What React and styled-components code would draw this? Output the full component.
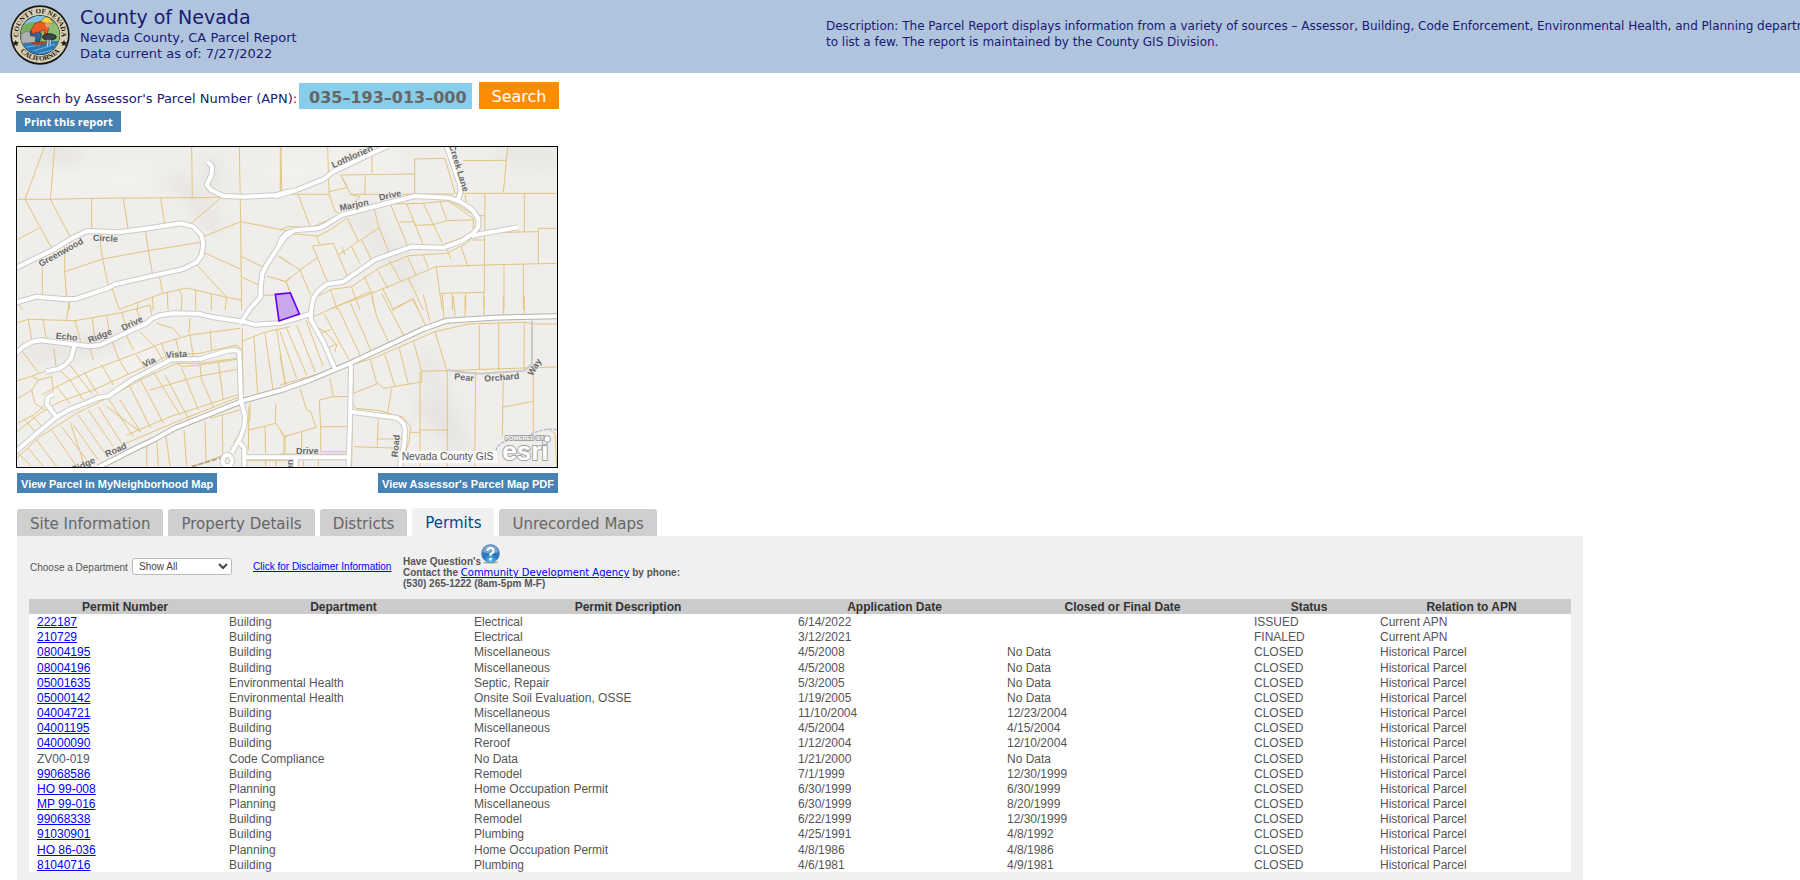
import React from "react";
import styled, { createGlobalStyle } from "styled-components";

const verdana = `"DejaVu Sans", sans-serif`;
const arial = `"Liberation Sans", sans-serif`;

const GlobalStyle = createGlobalStyle`
  * { box-sizing: border-box; }
  body { margin: 0; background: #fff; font-family: ${arial}; color: #555; }
  a { color: #0000ff; text-decoration: underline; }
`;

const Header = styled.header`
  display: flex;
  min-height: 73px;
  overflow: hidden;
  background: #b0c4de;
  color: #191970;
  font-family: ${verdana};
`;
const SealBox = styled.div`
  flex: none;
  padding: 5px 10px 8px 10px;
  svg { display: block; }
`;
const Titles = styled.div`
  flex: none;
  width: 746px;
  padding-top: 4px;
`;
const Title = styled.h1`
  margin: 0;
  font-size: 19px;
  line-height: 26px;
  font-weight: 400;
`;
const Line = styled.div`
  font-size: ${(p) => (p.$small ? 12 : 13)}px;
  line-height: 16px;
  white-space: nowrap;
`;
const Description = styled.div`
  flex: none;
  padding-top: 18px;
`;

const Top = styled.section`
  padding: 9px 16px 0;
  color: #191970;
  font-family: ${verdana};
`;
const SearchForm = styled.form`
  display: flex;
  align-items: flex-end;
`;
const SearchLabel = styled.label`
  font-size: 13px;
  line-height: 20px;
  width: 283px;
  white-space: nowrap;
`;
const ApnInput = styled.input`
  width: 173px;
  height: 26px;
  margin-right: 7px;
  padding: 2px 0 0 10px;
  border: 0;
  background: #87ceeb;
  color: #666;
  font: 700 16px ${verdana};
`;
const SearchButton = styled.button`
  width: 80px;
  height: 27px;
  padding: 2px 0 0;
  border: 0;
  background: #ff8c00;
  color: #fff;
  font: 400 16px ${verdana};
`;
const BlueButton = styled.button`
  height: 20px;
  padding: 1px 4px 0;
  border: 0;
  background: #4682b4;
  color: #fff;
  font: 700 11px ${arial};
  white-space: nowrap;
`;
const PrintButton = styled(BlueButton)`
  height: 21px;
  padding: 0 8px;
  font-family: "Open Sans", sans-serif;
`;
const PrintRow = styled.div`
  display: flex;
  padding-top: 2px;
`;
const MapColumn = styled.div`
  width: 542px;
  padding-top: 14px;
`;
const MapFrame = styled.div`
  border: 1px solid #000;
  svg { display: block; width: 100%; height: auto; }
`;
const MapButtons = styled.div`
  display: flex;
  justify-content: space-between;
  padding: 5px 0 0 1px;
`;

const Main = styled.main`
  width: 87%;
  margin: 15px 0 0 17px;
`;
const Tabs = styled.div`
  display: flex;
  align-items: flex-end;
  gap: 5px;
`;
const Tab = styled.button`
  height: ${(p) => (p.$active ? 28 : 27)}px;
  padding: 2px 13px 0;
  border: 0;
  border-radius: 3px 3px 0 0;
  background: ${(p) => (p.$active ? "#f0f0f0" : "#cfcfcf")};
  color: ${(p) => (p.$active ? "#004b87" : "#666")};
  font: 400 15px ${verdana};
  white-space: nowrap;
`;
const Panel = styled.section`
  padding: 8px 12px 10px;
  background: #f0f0f0;
`;
const Tools = styled.div`
  display: flex;
  height: 55px;
  padding-left: 1px;
  font-size: 10px;
`;
const DeptLabel = styled.label`
  width: 102px;
  padding-top: 17px;
  line-height: 14px;
`;
const DeptSelect = styled.select`
  width: 100px;
  height: 17px;
  margin: 14px 21px 0 0;
  padding: 0 2px;
  border: 1px solid #bbb;
  border-radius: 3px;
  background: #fff;
  color: #444;
  font: 400 10px ${arial};
`;
const Disclaimer = styled.a`
  width: 150px;
  padding-top: 16px;
  line-height: 14px;
  white-space: nowrap;
`;
const Contact = styled.div`
  font-weight: 700;
  line-height: 11px;
  color: #555;
  white-space: nowrap;
  a { font-family: ${verdana}; font-weight: 400; }
`;
const Question = styled.div`
  display: flex;
  align-items: flex-end;
  height: 23px;
  svg { margin-bottom: 3px; }
`;

const PermitTable = styled.table`
  width: 100%;
  height: 273px;
  border-collapse: collapse;
  table-layout: fixed;
  background: #fff;
  font-size: 12px;
  line-height: 13px;
`;
const Th = styled.th`
  height: 15px;
  padding: 1px 0 0;
  background: #cbcbcb;
  color: #333;
  text-align: center;
`;
const Td = styled.td`
  padding: 2px 8px 0;
  white-space: nowrap;
`;

const columns = [
  ["Permit Number", 192],
  ["Department", 245],
  ["Permit Description", 324],
  ["Application Date", 209],
  ["Closed or Final Date", 247],
  ["Status", 126],
  ["Relation to APN", 199],
];

const H = "Historical Parcel";
const permits = [
  ["222187", "Building", "Electrical", "6/14/2022", "", "ISSUED", "Current APN"],
  ["210729", "Building", "Electrical", "3/12/2021", "", "FINALED", "Current APN"],
  ["08004195", "Building", "Miscellaneous", "4/5/2008", "No Data", "CLOSED", H],
  ["08004196", "Building", "Miscellaneous", "4/5/2008", "No Data", "CLOSED", H],
  ["05001635", "Environmental Health", "Septic, Repair", "5/3/2005", "No Data", "CLOSED", H],
  ["05000142", "Environmental Health", "Onsite Soil Evaluation, OSSE", "1/19/2005", "No Data", "CLOSED", H],
  ["04004721", "Building", "Miscellaneous", "11/10/2004", "12/23/2004", "CLOSED", H],
  ["04001195", "Building", "Miscellaneous", "4/5/2004", "4/15/2004", "CLOSED", H],
  ["04000090", "Building", "Reroof", "1/12/2004", "12/10/2004", "CLOSED", H],
  ["ZV00-019", "Code Compliance", "No Data", "1/21/2000", "No Data", "CLOSED", H],
  ["99068586", "Building", "Remodel", "7/1/1999", "12/30/1999", "CLOSED", H],
  ["HO 99-008", "Planning", "Home Occupation Permit", "6/30/1999", "6/30/1999", "CLOSED", H],
  ["MP 99-016", "Planning", "Miscellaneous", "6/30/1999", "8/20/1999", "CLOSED", H],
  ["99068338", "Building", "Remodel", "6/22/1999", "12/30/1999", "CLOSED", H],
  ["91030901", "Building", "Plumbing", "4/25/1991", "4/8/1992", "CLOSED", H],
  ["HO 86-036", "Planning", "Home Occupation Permit", "4/8/1986", "4/8/1986", "CLOSED", H],
  ["81040716", "Building", "Plumbing", "4/6/1981", "4/9/1981", "CLOSED", H],
];

function Seal() {
  return (
    <svg width="60" height="60" viewBox="0 0 180 180" role="img" aria-label="County of Nevada seal">
      <defs>
        <clipPath id="sealInner"><circle cx="90" cy="90" r="58" /></clipPath>
        <path id="arcTop" d="M25 90A65 65 0 0 1 155 90" />
        <path id="arcBottom" d="M13 90A77 77 0 0 0 167 90" />
      </defs>
      <circle cx="90" cy="90" r="89" fill="#151515" />
      <circle cx="90" cy="90" r="84" fill="#d9cfb2" />
      <circle cx="90" cy="90" r="60" fill="#222" />
      <g clipPath="url(#sealInner)">
        <rect x="30" y="30" width="120" height="120" fill="#7fc4e6" />
        <path d="M30 66Q60 44 92 56T150 58V120H30Z" fill="#79ac5c" />
        <path d="M96 64Q125 50 150 60V116H96Z" fill="#8fbf72" />
        <path d="M30 112L150 108V150H30Z" fill="#2c78b8" />
        <path d="M48 126L90 120M70 138L135 118M86 146L130 134" stroke="#6bb5e2" strokeWidth="3" />
        <path d="M32 115L34 88 46 80 62 78 78 88 84 112Z" fill="#b0b0b0" stroke="#777" strokeWidth="2" />
        <path d="M60 112L118 108 122 114 78 122Z" fill="#a34a28" />
        <path d="M60 80L86 78 94 88 88 110 76 110 78 94 62 92Z" fill="#2f66a6" stroke="#223" strokeWidth="2" />
        <path d="M64 74L76 54 94 48 108 56 116 70 112 86 104 88 102 74 90 80 66 86Z" fill="#ee5a24" stroke="#7c2d14" strokeWidth="2" />
        <path d="M94 46L106 36 120 38 126 48 132 54 112 55 96 52Z" fill="#f8d13c" stroke="#8e681d" strokeWidth="2" />
        <path d="M104 55L118 55 118 66 110 68Z" fill="#e6a276" />
        <ellipse cx="118" cy="96" rx="21" ry="10" fill="#39434a" stroke="#111" strokeWidth="2" />
        <path d="M114 104L112 126M121 104L120 120" stroke="#9fd5f0" strokeWidth="4" />
      </g>
      <g fill="#171717" fontFamily="Liberation Serif, serif" fontWeight="700" fontSize="21" textAnchor="middle">
        <text><textPath href="#arcTop" startOffset="50%">COUNTY OF NEVADA</textPath></text>
        <text><textPath href="#arcBottom" startOffset="50%">CALIFORNIA</textPath></text>
      </g>
      <path d="M17 105l3 6 7 1-5 4 1 7-6-3-6 3 1-7-5-4 7-1zM162 105l3 6 7 1-5 4 1 7-6-3-6 3 1-7-5-4 7-1z" fill="#222" />
    </svg>
  );
}

/* The map is drawn as four tiles, each with its own origin. */
const tiles = {
  nw: "translate(-21 -21)",
  ne: "translate(789 -21)",
  sw: "translate(-21 459)",
  se: "translate(789 459)",
};

const roads = [
  ["nw", "M15 385L128 330 185 295 232 273 325 277 400 267 515 250 550 260 575 287 580 312 575 345 560 367 520 387 430 407 315 433 295 444 200 476 170 478 80 470 15 488"],
  ["nw", "M592 64L606 79 605 103 590 135 603 150 640 168 700 170 795 166 840 153"],
  ["ne", "M-15 170L0 165 50 150 130 118 160 95 255 50 325 17"],
  ["ne", "M498 15L515 60 540 135 542 155 533 182"],
  ["sw", "M690 72L720 26 752 -10 752 -38 757 -80 770 -105 825 -190 850 -206"],
  ["ne", "M-3 315L5 295 20 280 45 271 115 265 135 256 185 225 405 168 505 173 540 185 575 207 595 235 595 260 580 280 545 303 490 323 395 320 285 359 190 425 140 433 113 455 100 475 93 515 92 530"],
  ["ne", "M575 289L605 281 715 262"],
  ["sw", "M15 162L40 140 65 126 90 121 240 139 270 135 330 107 410 70 425 56 450 46 490 40 565 41 610 52 700 65 735 74 810 69 902 42"],
  ["sw", "M193 138L183 175 165 195 145 207 108 214"],
  ["sw", "M15 457L75 405 140 350 180 328 235 306 260 295 295 288 370 237 430 206 485 178 570 177 650 153 675 150 688 157 693 300 705 350 703 380 690 415 665 458"],
  ["sw", "M130 282L113 293 110 312 140 352"],
  ["sw", "M690 428L703 445 703 510"],
  ["sw", "M705 472L1022 472"],
  ["se", "M93 42L93 60 130 125 165 207"],
  ["se", "M213 195L210 370 205 510"],
  ["se", "M213 335L350 353 370 370 375 390 373 430 358 510"],
  ["se", "M47 472L47 510"],
];
const highway = ["sw", "M265 502L385 441 430 420 495 384 610 338 700 302 815 270 900 240 1020 190 1240 87 1310 62 1450 53 1660 48"];

const parcels = [
  ["nw", "M103 21L45 178M134 21L121 178M15 178L121 178 245 175 545 173 635 172M545 21L547 173M688 21L692 245 695 510M811 21V155M45 178L125 325M121 178L182 293M245 175V272M340 175L354 267M452 175L464 252M635 172L543 250M15 302L88 264M97 358V465M164 320V395L170 478M164 395L278 357 415 332 578 306M268 290L278 357 295 438M406 270L415 332 428 405M692 245L580 290M692 245L830 272M580 337L693 388M560 374L650 472M448 408L458 460M305 440L328 508 458 460 530 444 650 472 695 480M695 350L757 380M697 412L745 434M805 348L840 372M770 408L828 425 840 455M828 425L840 410M745 466L800 465M383 487V510M427 470L430 510M472 458L474 510M505 449L516 466 514 510M557 450V510M604 461V510M650 472L645 510M178 484V510M25 488L38 510"],
  ["ne", "M3 21L5 162M143 21L147 155 150 170M0 163H150M276 50V100M182 105L405 102M182 105L212 163 520 162M256 105L254 163M404 160V57L495 55 525 160M550 62L680 61M683 21L670 158M525 160H830M55 166L90 258M148 155L203 142 182 105M148 165L165 213 185 225M0 270L25 260 95 262 200 215 240 170 212 163M0 290L45 282 115 288 150 270 200 235M118 312L110 288M203 235L235 305M282 205L297 263 326 335M297 263L175 345M98 318L160 310 205 415M98 318L142 425M0 350L60 390 113 352M60 390L92 465M60 390L18 425 0 420M18 425L30 455M330 190L382 315M380 190L430 315M430 190L487 310M480 185L500 240M358 246L400 245 408 256 460 254 500 242 580 240M500 180L580 235V280L482 317M342 192L425 190 510 182 582 225 615 228M555 165L560 195M615 160L613 375M733 160V275M613 278L775 275M775 265H830M775 265V370M468 380L613 375 830 370M672 375V510M730 372V510M468 380L487 510M482 460L613 457V375M517 460V510M557 460V510M612 457V510M495 315L513 357M543 318L562 375M575 300H613M100 475L155 448 215 440 295 385 385 347 500 340 560 310 600 270M328 362L362 423M382 348L408 405M430 345L445 385M292 390L324 445M253 408L275 460M155 505L275 460 385 415 468 380M152 450L172 510M214 440L240 510M275 460L285 510M308 445L340 510M385 415L430 510M340 505L397 478 415 510M215 320L240 370M185 320L195 345M245 300L275 360"],
  ["sw", "M15 70L55 58 195 62 335 38 420 15M55 58L65 118M98 55L110 120M178 0L170 58M195 62L212 125M247 53L255 130M290 48L302 115M335 38L350 85M378 25L395 65M420 15L425 45M15 245L65 228 110 212 125 205M38 155L85 218M65 228L85 240 125 230 130 270 105 315 70 345 22 370M15 300L65 270 85 240M65 270L75 310 105 330M132 145L138 200 180 240 220 300M95 285L140 260 245 210 380 160 455 130 540 105 690 85M240 145L250 180M305 120L325 175M348 105L370 150M390 95L435 140M440 70L490 85 510 110M540 55L537 100M600 90L605 150M540 105L550 170M497 115L510 170M455 130L470 175M435 140L455 175M380 165L405 205M325 175L355 225M275 195L310 255M222 215L265 285M180 195L245 280M140 260L180 310M15 400L90 340 150 305 250 270 350 225 480 165 570 160 680 135 697 150 700 280M15 480L90 410 200 340 300 290 400 235 500 190 570 190 680 175M500 190L515 200 570 195 680 178M515 205L565 330M570 195L575 240 610 320M625 185L640 300M420 270L560 230 680 208M430 215L510 345M465 225L535 355M390 235L460 370M355 250L422 385M330 300L392 395M295 295L370 410M290 320L390 395M265 320L335 430M235 330L310 440M205 345L285 460M190 375L265 480M180 365L225 500M155 380L230 480M125 390L200 500M80 420L140 500M55 445L100 500M25 460L65 500M45 360L75 395M65 345L95 378M697 123L760 98 840 80M697 85V150M732 110L743 285M765 100L790 275M800 90L828 265M335 435L500 365 690 290M350 405L480 350 690 282M410 430V500M440 418L445 500M468 408L480 500M522 390L530 500M585 365L588 485M637 345L638 460M690 330L600 355M717 320L715 450M797 310V370L717 390M797 370L825 410 840 405M765 378L767 460M825 410V460M550 500L640 465M697 430V500M708 482H840M767 480V500M797 482V500M670 430L690 400 720 360 720 310"],
  ["se", "M100 75L135 95 170 135 165 155M120 100L155 88M138 145L172 132M0 165L15 250M0 95L50 235M20 85L80 225M50 75L105 215M78 60L130 200M100 50L270 -25M133 42L210 185M175 25L240 165M212 10L272 150M275 -10L290 50 325 125M305 -20L370 105M337 32L400 -5 440 85M430 -15L450 65M487 -20L492 60M520 -10L525 50M555 -10V48M612 -10V45M670 -10V45M733 -10V45M465 95L565 72 733 67 760 72H840M465 95L500 210M598 75V210M656 68V210M733 67L732 210M425 214L830 201M0 255L280 175 465 95M220 195V280L295 250 310 265 425 246V214M272 180L290 250M315 165L345 260M358 145L385 252M400 122L425 214M420 215V500M502 210V500M587 215L584 500M670 220L667 410M667 322L760 304M760 205V400M335 265L322 345M216 310L228 325 300 332 370 352 392 380 388 420 365 500M295 350L292 440M222 440L365 445M290 417H370M420 390H502M390 397H420M150 235L160 290H205M118 300L160 290M118 300L122 380H205M60 265L80 330 92 335 108 382M0 390L12 410 108 382M12 410V470M65 397V460M122 380V455H202M217 345L215 500M70 480V500M115 480V500M0 462H205M800 385L825 400 830 500"],
];

const labels = [
  ["nw", 157, 345, -29, "Greenwood"],
  ["nw", 286, 304, 3, "Circle"],
  ["ne", 220, 58, -24, "Lothlorien"],
  ["ne", 224, 204, -12, "Marjon"],
  ["ne", 332, 175, -13, "Drive"],
  ["ne", 528, 87, 73, "Creek Lane"],
  ["sw", 169, 119, 5, "Echo"],
  ["sw", 273, 116, -22, "Ridge"],
  ["sw", 370, 78, -26, "Drive"],
  ["sw", 421, 195, -25, "Via"],
  ["sw", 500, 172, -3, "Vista"],
  ["sw", 321, 458, -24, "Road"],
  ["sw", 223, 503, -25, "Ridge"],
  ["se", 551, 241, 6, "Pear"],
  ["se", 666, 241, -5, "Orchard"],
  ["se", 771, 206, -58, "Way"],
  ["se", 82, 462, 0, "Drive"],
  ["se", 356, 439, -84, "Road"],
  ["se", 40, 494, -90, "en"],
];

function ParcelMap() {
  return (
    <svg viewBox="0 0 1620 960" role="img" aria-label="Parcel map" fontFamily="Liberation Sans, sans-serif">
      <defs>
        <filter id="soft" x="-50%" y="-50%" width="200%" height="200%"><feGaussianBlur stdDeviation="26" /></filter>
      </defs>
      <rect width="1620" height="960" fill="#efeeeb" />
      <g filter="url(#soft)" fill="none" strokeLinecap="round">
        <path d="M90 15L180 25M580 50L590 110M420 90L500 110 600 240M30 620L300 580M1210 780L1300 850" stroke="#d8d3cd" strokeWidth="32" opacity=".55" />
        <path d="M1480 20L1600 30M1030 200L1180 400M1230 650L1330 900" stroke="#dfddd8" strokeWidth="70" opacity=".4" />
        <path d="M40 780L400 620M700 560L980 610M100 120L430 90M790 80L1100 40" stroke="#f8f6f1" strokeWidth="70" opacity=".5" />
      </g>
      <g fill="none" stroke="#e2c57f" strokeWidth="3">
        {parcels.map(([t, d]) => <path key={t} d={d} transform={tiles[t]} />)}
      </g>
      <path d="M505 210Q545 218 600 221L735 212 756 190V62" transform={tiles.se} fill="none" stroke="#c9c9c9" strokeWidth="6" />
      <path d="M648 452Q650 430 690 420M740 410Q790 380 835 390" transform={tiles.se} fill="none" stroke="#aab9d0" strokeWidth="4" strokeDasharray="10 4" />
      <path d="M545 500L650 468" transform={tiles.sw} fill="none" stroke="#b19b7d" strokeWidth="5" strokeDasharray="16 5" />
      <g fill="none" strokeLinejoin="round">
        <g stroke="#cbcac8" strokeWidth="18">
          {roads.map(([t, d]) => <path key={d} d={d} transform={tiles[t]} />)}
          <ellipse cx="652" cy="482" rx="14" ry="17" transform={tiles.sw} />
        </g>
        <path d={highway[1]} transform={tiles[highway[0]]} stroke="#b4b1ab" strokeWidth="18" />
        <g stroke="#fff" strokeWidth="12">
          {roads.map(([t, d]) => <path key={d} d={d} transform={tiles[t]} />)}
          <ellipse cx="652" cy="482" rx="14" ry="17" transform={tiles.sw} />
          <path d={highway[1]} transform={tiles[highway[0]]} />
        </g>
      </g>
      <path d="M775 442L820 438 847 501 786 522Z" fill="#c9a9ee" stroke="#6a00f4" strokeWidth="5" />
      <g fill="#666" stroke="#f3f2ef" strokeWidth="3" paintOrder="stroke" fontSize="27" fontWeight="700" textAnchor="middle">
        {labels.map(([t, x, y, r, text]) => (
          <text key={t + x} transform={`${tiles[t]} translate(${x} ${y}) rotate(${r})`}>{text}</text>
        ))}
      </g>
      <rect x="1146" y="912" width="294" height="36" fill="#fff" opacity=".7" />
      <text x="1154" y="939" fill="#555" fontSize="31">Nevada County GIS</text>
      <g fill="#fff" stroke="#a3a3a3" strokeWidth="6" strokeLinejoin="round" paintOrder="stroke" fontWeight="700">
        <text x="1456" y="938" fontSize="78">esri</text>
        <text x="1465" y="879" fontSize="17">POWERED BY</text>
        <circle cx="1591" cy="876" r="8" />
      </g>
    </svg>
  );
}

function HelpIcon() {
  return (
    <svg width="19" height="20" viewBox="0 0 38 40" role="img" aria-label="Help">
      <defs>
        <radialGradient id="ball" cx="50%" cy="95%" r="90%">
          <stop offset="0" stopColor="#5cc8f5" />
          <stop offset=".5" stopColor="#2471bd" />
          <stop offset="1" stopColor="#5d92cc" />
        </radialGradient>
      </defs>
      <ellipse cx="19" cy="37" rx="15" ry="2" fill="#777" opacity=".6" />
      <circle cx="19" cy="19" r="18" fill="url(#ball)" stroke="#376da8" />
      <path d="M4 16Q7 3 19 3T34 16Q19 22 4 16Z" fill="#fff" opacity=".3" />
      <path d="M13 14Q13 8 19 8T25 14Q25 18 19 20V24" fill="none" stroke="#fff" strokeWidth="4" />
      <circle cx="19" cy="30" r="3" fill="#fff" />
    </svg>
  );
}

const tabNames = ["Site Information", "Property Details", "Districts", "Permits", "Unrecorded Maps"];

export default function App() {
  return (
    <>
      <GlobalStyle />
      <Header>
        <SealBox><Seal /></SealBox>
        <Titles>
          <Title>County of Nevada</Title>
          <Line>Nevada County, CA Parcel Report</Line>
          <Line>Data current as of: 7/27/2022</Line>
        </Titles>
        <Description>
          <Line $small>Description: The Parcel Report displays information from a variety of sources – Assessor, Building, Code Enforcement, Environmental Health, and Planning departments,</Line>
          <Line $small>to list a few. The report is maintained by the County GIS Division.</Line>
        </Description>
      </Header>
      <Top>
        <SearchForm onSubmit={(e) => e.preventDefault()}>
          <SearchLabel htmlFor="apn">Search by Assessor's Parcel Number (APN):</SearchLabel>
          <ApnInput id="apn" defaultValue="035–193–013–000" />
          <SearchButton type="submit">Search</SearchButton>
        </SearchForm>
        <PrintRow><PrintButton type="button">Print this report</PrintButton></PrintRow>
        <MapColumn>
          <MapFrame><ParcelMap /></MapFrame>
          <MapButtons>
            <BlueButton type="button">View Parcel in MyNeighborhood Map</BlueButton>
            <BlueButton type="button">View Assessor's Parcel Map PDF</BlueButton>
          </MapButtons>
        </MapColumn>
      </Top>
      <Main>
        <Tabs role="tablist">
          {tabNames.map((name) => (
            <Tab key={name} type="button" role="tab" aria-selected={name === "Permits"} $active={name === "Permits"}>{name}</Tab>
          ))}
        </Tabs>
        <Panel>
          <Tools>
            <DeptLabel htmlFor="dept">Choose a Department</DeptLabel>
            <DeptSelect id="dept" defaultValue="Show All"><option>Show All</option></DeptSelect>
            <Disclaimer href="#disclaimer">Click for Disclaimer Information</Disclaimer>
            <Contact>
              <Question>Have Question's<HelpIcon /></Question>
              <div>Contact the <a href="#cda">Community Development Agency</a> by phone:</div>
              <div>(530) 265-1222 (8am-5pm M-F)</div>
            </Contact>
          </Tools>
          <PermitTable>
            <colgroup>{columns.map(([name, w]) => <col key={name} width={w} />)}</colgroup>
            <thead>
              <tr>{columns.map(([name]) => <Th key={name} scope="col">{name}</Th>)}</tr>
            </thead>
            <tbody>
              {permits.map((row) => (
                <tr key={row[0]}>
                  {row.map((cell, i) => (
                    <Td key={i}>{i === 0 && cell !== "ZV00-019" ? <a href={`#${cell}`}>{cell}</a> : cell}</Td>
                  ))}
                </tr>
              ))}
            </tbody>
          </PermitTable>
        </Panel>
      </Main>
    </>
  );
}
